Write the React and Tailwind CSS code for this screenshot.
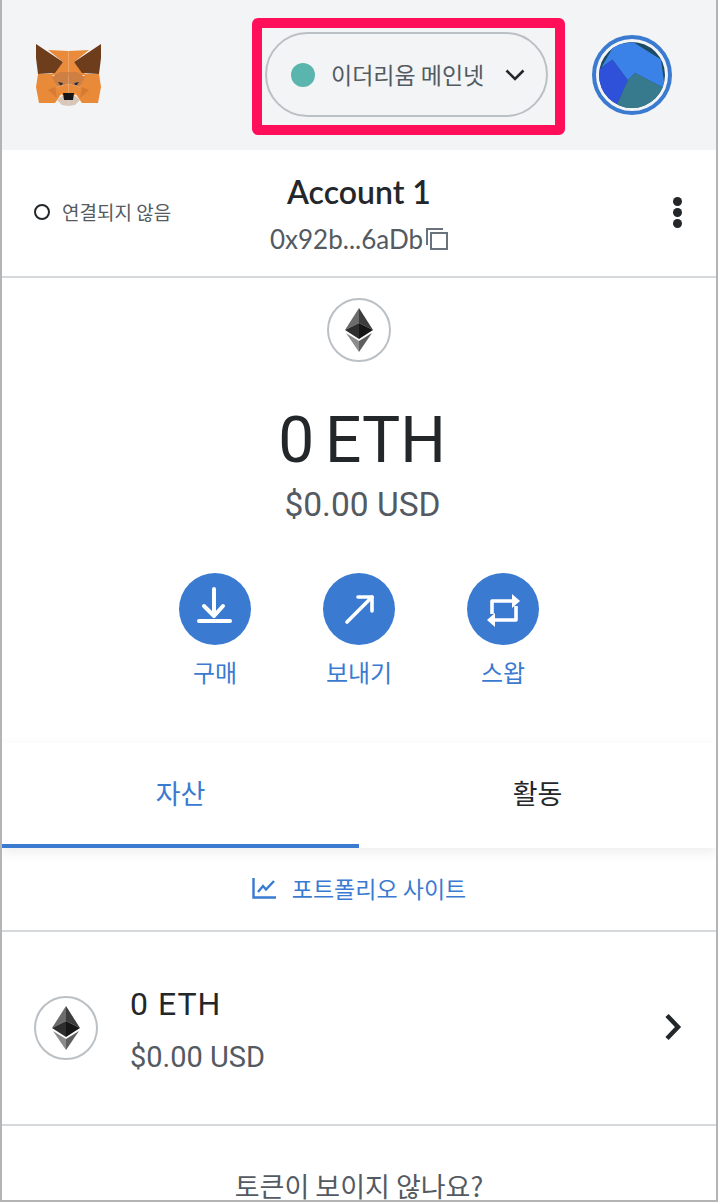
import React from "react";

const KR = '"Noto Sans CJK KR", sans-serif';
const DIN = 'Roboto, "Noto Sans CJK KR", sans-serif';
const GEO = 'Lato, "Noto Sans CJK KR", sans-serif';

function Fox() {
  const half = (
    <g>
      <polygon points="48,50 68.5,51 68.5,76 51,75 63,62" fill="#e98b3a" />
      <polygon points="36,44 63,62 55,73 38,74 37,66 36,58" fill="#6e3d1c" />
      <polygon points="38,74 52,74 57,87 62,93 55,103 39,103 36,87" fill="#e88a38" />
      <polygon points="48,90 55,87 57,98" fill="#d67a34" />
      <polygon points="52,77 60,72 68.5,72 68.5,84 57,87" fill="#cf7f42" />
      <polygon points="57,87 68.5,84 68.5,95 62,95" fill="#e88b3b" />
      <polygon points="58,82 63,83 62,85 60,85" fill="#233447" />
      <polygon points="57,100 63,95 68.5,95 68.5,106 62,105" fill="#d8c6b8" />
    </g>
  );
  return (
    <svg width="66" height="62" viewBox="36 44 66 62" className="shrink-0">
      {half}
      <g transform="translate(137,0) scale(-1,1)">{half}</g>
      <polygon points="63,93 74,93 73,100 64,100" fill="#161616" />
    </svg>
  );
}

function Eth({ className }) {
  return (
    <svg viewBox="0 0 28 44" className={className}>
      <polygon points="14,0 0,22 14,15" fill="#6c6c6c" />
      <polygon points="14,0 28,22 14,15" fill="#3d3d3d" />
      <polygon points="0,22 14,15 14,31" fill="#2e2e2e" />
      <polygon points="28,22 14,15 14,31" fill="#161616" />
      <polygon points="1,25 14,33 14,44" fill="#8c8c8c" />
      <polygon points="27,25 14,33 14,44" fill="#5f5f5f" />
    </svg>
  );
}

function EthBadge() {
  return (
    <div className="w-16 h-16 rounded-full border-2 border-[#bbc0c5] flex items-center justify-center bg-white">
      <Eth className="w-[28px] h-[44px]" />
    </div>
  );
}

function Action({ label, children }) {
  return (
    <div className="w-[72px] flex flex-col items-center">
      <div className="w-[72px] h-[72px] rounded-full bg-[#3a7bd1]">
        <svg width="72" height="72" viewBox="0 0 72 72" fill="none" stroke="#fff" strokeLinecap="round" strokeLinejoin="round">
          {children}
        </svg>
      </div>
      <div className="mt-[9px] text-[24px] leading-[36px] text-[#3a7bd1] whitespace-nowrap" style={{ fontFamily: KR }}>
        {label}
      </div>
    </div>
  );
}

export default function App() {
  return (
    <div className="w-[718px] h-[1202px] overflow-hidden bg-white border-x-2 border-b-2 border-[#b4b4b4] flex flex-col text-[#24272a]">
      <header className="h-[150px] shrink-0 bg-[#f2f4f6] flex items-center pl-[34px]">
        <Fox />
        <div className="ml-[150px] self-start mt-[18px] border-[10px] border-[#ff0f5a] rounded-[6px] pt-[4px] pl-[3px] pr-[7px] pb-[8px]">
          <div className="w-[283px] h-[85px] rounded-full border-2 border-[#bbc0c5] flex items-center pl-[24px]">
            <span className="w-6 h-6 rounded-full bg-[#5ab5ae] shrink-0" />
            <span className="ml-[16px] text-[23px] leading-none text-[#535a61] whitespace-nowrap" style={{ fontFamily: KR }}>
              이더리움 메인넷
            </span>
            <svg width="20" height="12" viewBox="0 0 20 12" fill="none" stroke="#24272a" strokeWidth="2.6" className="ml-[21px]">
              <path d="M1.5 1.5 L10 10 L18.500 1.500" />
            </svg>
          </div>
        </div>
        <div className="ml-[27px] w-20 h-20 rounded-full border-4 border-[#3a7bd1] p-[3px] shrink-0">
          <svg viewBox="0 0 64 64" className="w-full h-full rounded-full">
            <rect width="64" height="64" fill="#1c4a60" />
            <polygon points="15,3 33,0 60,17 64,45 35,30 28,37 13,17 2,25" fill="#3b82e8" />
            <polygon points="0,27 13,17 28,37 18,60 16,64 0,64" fill="#2f50d8" />
            <polygon points="35,30 64,45 64,64 16,64 28,37" fill="#377a8e" />
          </svg>
        </div>
      </header>

      <section className="h-[128px] shrink-0 border-b-2 border-[#d6d9dc] relative flex flex-col items-center">
        <div className="mt-[22px] text-[32px] leading-[40px] font-semibold" style={{ fontFamily: GEO }}>
          Account 1
        </div>
        <div className="mt-[11px] flex items-center text-[26px] leading-[32px] text-[#535a61]" style={{ fontFamily: GEO }}>
          0x92b...6aDb
          <svg width="22" height="22" viewBox="0 0 22 22" fill="none" stroke="#6a737d" strokeWidth="2" className="ml-[3px]">
            <path d="M1 17 V1 H17" />
            <rect x="5" y="5" width="16" height="16" />
          </svg>
        </div>
        <div className="absolute left-[32px] top-[50px] flex items-center">
          <span className="w-4 h-4 rounded-full border-2 border-[#24272a]" />
          <span className="ml-[12px] text-[19px] leading-[24px] text-[#535a61] whitespace-nowrap" style={{ fontFamily: KR }}>
            연결되지 않음
          </span>
        </div>
        <div className="absolute left-[671px] top-[47px] flex flex-col gap-[2px]">
          <span className="w-[9px] h-[9px] rounded-full bg-[#24272a]" />
          <span className="w-[9px] h-[9px] rounded-full bg-[#24272a]" />
          <span className="w-[9px] h-[9px] rounded-full bg-[#24272a]" />
        </div>
      </section>

      <section className="h-[465px] shrink-0 flex flex-col items-center pt-[20px]">
        <EthBadge />
        <div className="mt-[43px] pl-[6px] text-[64px] leading-[72px] text-[#24272a] whitespace-nowrap [word-spacing:-5px]" style={{ fontFamily: DIN }}>
          0 ETH
        </div>
        <div className="mt-[8px] pl-[7px] text-[33.5px] leading-[40px] text-[#535a61] whitespace-nowrap" style={{ fontFamily: DIN }}>
          $0.00 USD
        </div>
        <div className="mt-[48px] flex gap-[72px]">
          <Action label="구매">
            <g strokeWidth="4">
              <path d="M35 16 V41" />
              <path d="M25 33 L35 43 L44 33" />
              <path d="M20 48 H51" />
            </g>
          </Action>
          <Action label="보내기">
            <g strokeWidth="3.6">
              <path d="M24 49 L49 24" />
              <path d="M35 24 H49 V38" />
            </g>
          </Action>
          <Action label="스왑">
            <g strokeWidth="3.6" strokeLinecap="butt">
              <path d="M25 41 V28 H47" />
              <path d="M49 33 V47 H27" />
            </g>
            <polygon points="45,21 53,28 45,35" fill="#fff" stroke="none" />
            <polygon points="28,40 20,47 28,54" fill="#fff" stroke="none" />
          </Action>
        </div>
      </section>

      <nav className="h-[105px] shrink-0 flex shadow-[0_4px_12px_rgba(0,0,0,0.08)] relative">
        <div className="flex-1 border-b-4 border-[#3a7bd1] flex items-center justify-center text-[27px] text-[#3a7bd1]" style={{ fontFamily: KR }}>
          자산
        </div>
        <div className="flex-1 flex items-center justify-center text-[27px] text-[#24272a] pb-[4px]" style={{ fontFamily: KR }}>
          활동
        </div>
      </nav>

      <div className="h-[84px] shrink-0 border-b-2 border-[#d6d9dc] flex items-center justify-center text-[#3a7bd1] pb-[2px]">
        <svg width="24" height="22" viewBox="0 0 24 22" fill="none" stroke="#3a7bd1" strokeWidth="2.4">
          <path d="M1.500 1 V20.500 H24" />
          <path d="M6 15 L11 9 L14 12.500 L22 4" />
        </svg>
        <span className="ml-[16px] text-[23px] leading-none whitespace-nowrap" style={{ fontFamily: KR }}>
          포트폴리오 사이트
        </span>
      </div>

      <div className="h-[194px] shrink-0 border-b-2 border-[#d6d9dc] flex items-center pl-[32px] pr-[34px]">
        <EthBadge />
        <div className="ml-[32px] flex-1 pt-[4px]">
          <div className="text-[32px] leading-[40px] tracking-[1px]" style={{ fontFamily: DIN }}>
            0 ETH
          </div>
          <div className="mt-[13px] text-[29px] leading-[40px] text-[#535a61]" style={{ fontFamily: DIN }}>
            $0.00 USD
          </div>
        </div>
        <svg width="18" height="28" viewBox="0 0 18 28" fill="none" stroke="#24272a" strokeWidth="4.500" className="mb-[3px]">
          <path d="M3 2.500 L14 14 L3 25.500" />
        </svg>
      </div>

      <div className="pt-[45px] text-center text-[27px] leading-[30px] text-[#535a61] whitespace-nowrap" style={{ fontFamily: KR }}>
        토큰이 보이지 않나요?
      </div>
    </div>
  );
}
